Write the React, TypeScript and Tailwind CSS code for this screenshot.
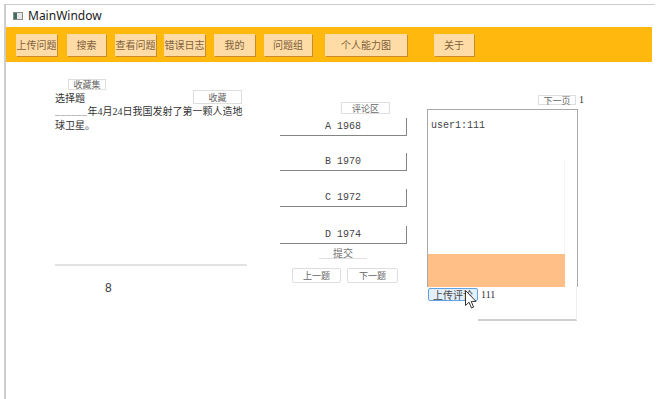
import React from 'react';

const toolButtons = [
  { label: '上传问题', ml: 'ml-[10px]', w: 'w-[41px]' },
  { label: '搜索', ml: 'ml-[10px]', w: 'w-[39px]' },
  { label: '查看问题', ml: 'ml-[9px]', w: 'w-[41px]' },
  { label: '错误日志', ml: 'ml-[8px]', w: 'w-[41px]' },
  { label: '我的', ml: 'ml-[9px]', w: 'w-[41px]' },
  { label: '问题组', ml: 'ml-[9px]', w: 'w-[48px]' },
  { label: '个人能力图', ml: 'ml-[13px]', w: 'w-[82px]' },
  { label: '关于', ml: 'ml-[27px]', w: 'w-[40px]' },
];

const options = [
  { label: 'A 1968', mt: 'mt-[4px]' },
  { label: 'B 1970', mt: 'mt-[17px]' },
  { label: 'C 1972', mt: 'mt-[18px]' },
  { label: 'D 1974', mt: 'mt-[19px]' },
];

const cjk = "font-['Noto_Sans_CJK_SC',sans-serif]";
const serifCjk = "font-['Liberation_Serif','Noto_Sans_CJK_SC',serif]";
const mono = "font-['Liberation_Mono','Noto_Sans_CJK_SC',monospace]";

function SmallButton({ label, className }: { label: string; className: string }) {
  return (
    <div
      className={`flex items-center justify-center border border-[#dedede] bg-white text-[9px] leading-none text-[#666] ${cjk} ${className}`}
    >
      {label}
    </div>
  );
}

export default function App() {
  return (
    <div className="relative w-[661px] h-[399px] overflow-hidden bg-white">
      <div className="ml-[4px] mt-[4px] h-[395px] w-[651px] border-l-2 border-t border-[#cdcdcd]">
        {/* title bar */}
        <div className="flex h-[22px] items-center pl-[7px]">
          <div className="flex h-[8px] w-[10px] border border-[#8a8a8a]">
            <div className="w-[3px] bg-[#3f6f5a]"></div>
            <div className="flex-1 bg-[#e6e6e6]"></div>
          </div>
          <span className="ml-[5px] text-[12px] text-[#1a1a1a] font-['Noto_Sans',sans-serif]">
            MainWindow
          </span>
        </div>

        {/* toolbar */}
        <div className="flex h-[35px] w-[646px] items-center bg-[#ffb80e]">
          {toolButtons.map((b) => (
            <div
              key={b.label}
              className={`${b.ml} ${b.w} flex h-[22px] items-center justify-center bg-[#ffdca6] shadow-[1px_1px_0_#c98b2c] text-[10px] leading-none text-[#7d5f3c] ${cjk}`}
            >
              {b.label}
            </div>
          ))}
        </div>

        {/* content */}
        <div className="flex">
          {/* question column */}
          <div className="ml-[49px] w-[193px] pt-[17px]">
            <SmallButton label="收藏集" className="ml-[13px] h-[11px] w-[38px]" />
            <div className="flex w-[187px] items-end justify-between">
              <span className={`text-[10px] leading-[12px] text-[#333] ${cjk}`}>选择题</span>
              <SmallButton label="收藏" className="h-[14px] w-[49px]" />
            </div>
            <div className={`mt-[1px] h-[26px] text-[10px] leading-[13px] text-[#333] ${serifCjk}`}>
              <div className="flex items-baseline">
                <span className={`text-[8px] tracking-[0.6px] ${mono}`}>______</span>
                <span>年4月24日我国发射了第一颗人造地</span>
              </div>
              <div>球卫星。</div>
            </div>
            <div className="mt-[133px] h-[2px] w-[192px] bg-[#e2e2e2]"></div>
            <div className="ml-[50px] mt-[16px] text-[12px] leading-[12px] text-[#3a3a3a] font-['Liberation_Sans_Narrow','Liberation_Sans',sans-serif]">
              8
            </div>
          </div>

          {/* answer column */}
          <div className="ml-[32px] flex w-[127px] flex-col pt-[40px]">
            <SmallButton label="评论区" className="ml-[61px] h-[12px] w-[49px]" />
            {options.map((o) => (
              <div
                key={o.label}
                className={`${o.mt} flex h-[18px] w-full items-center justify-center border-r border-b border-[#858585] text-[10px] leading-none text-[#444] ${mono}`}
              >
                {o.label}
              </div>
            ))}
            <div
              className={`ml-[39px] mt-[4px] flex h-[11px] w-[48px] items-center justify-center border-b border-[#e0e0e0] text-[10px] leading-none text-[#777] ${cjk}`}
            >
              提交
            </div>
            <div className="mt-[9px] flex">
              <SmallButton label="上一题" className="ml-[12px] h-[15px] w-[49px] rounded-[2px]" />
              <SmallButton label="下一题" className="ml-[6px] h-[15px] w-[51px] rounded-[2px]" />
            </div>
          </div>

          {/* comment column */}
          <div className="ml-[20px] w-[158px] pt-[33px]">
            <div className="flex items-center">
              <SmallButton label="下一页" className="ml-[111px] h-[10px] w-[38px]" />
              <span className="ml-[3px] text-[10px] leading-none text-[#333] font-['Liberation_Serif',serif]">1</span>
            </div>
            <div className="mt-[4px] flex h-[178px] w-[151px] flex-col justify-between border border-b-0 border-[#a8a8a8]">
              <div className="flex flex-1 flex-col">
                <div className={`pl-[3px] pt-[10px] text-[10px] leading-[12px] text-[#444] ${mono}`}>
                  user1:111
                </div>
                <div className="mt-[28px] w-[137px] flex-1 border-r border-[#f5f5f5]"></div>
              </div>
              <div className="h-[33px] w-[137px] bg-[#ffbf87]"></div>
            </div>
            <div className="flex">
              <div
                className={`ml-[1px] mt-[1px] flex h-[13px] w-[50px] items-center justify-center rounded-[2px] border border-[#5fa2e0] bg-[#e3f0fb] text-[10px] leading-none text-[#444] ${cjk}`}
              >
                上传评论
              </div>
              <div className="h-[34px] w-[99px] border-r border-b-2 border-r-[#eeeeee] border-b-[#cfcfcf] pl-[3px] pt-[2px] text-[10px] leading-[12px] text-[#333] font-['Liberation_Serif',serif]">
                111
              </div>
            </div>
          </div>
        </div>
      </div>

      {/* mouse cursor */}
      <svg className="absolute left-[465px] top-[290px]" width="12" height="19" viewBox="0 0 12 19">
        <path
          d="M0.5 0.5 L0.5 15.5 L4 12.2 L6.5 18 L8.6 17.1 L6.2 11.4 L11 11.4 Z"
          fill="#ffffff"
          stroke="#333333"
          strokeWidth="1"
          strokeLinejoin="round"
        />
      </svg>
    </div>
  );
}
